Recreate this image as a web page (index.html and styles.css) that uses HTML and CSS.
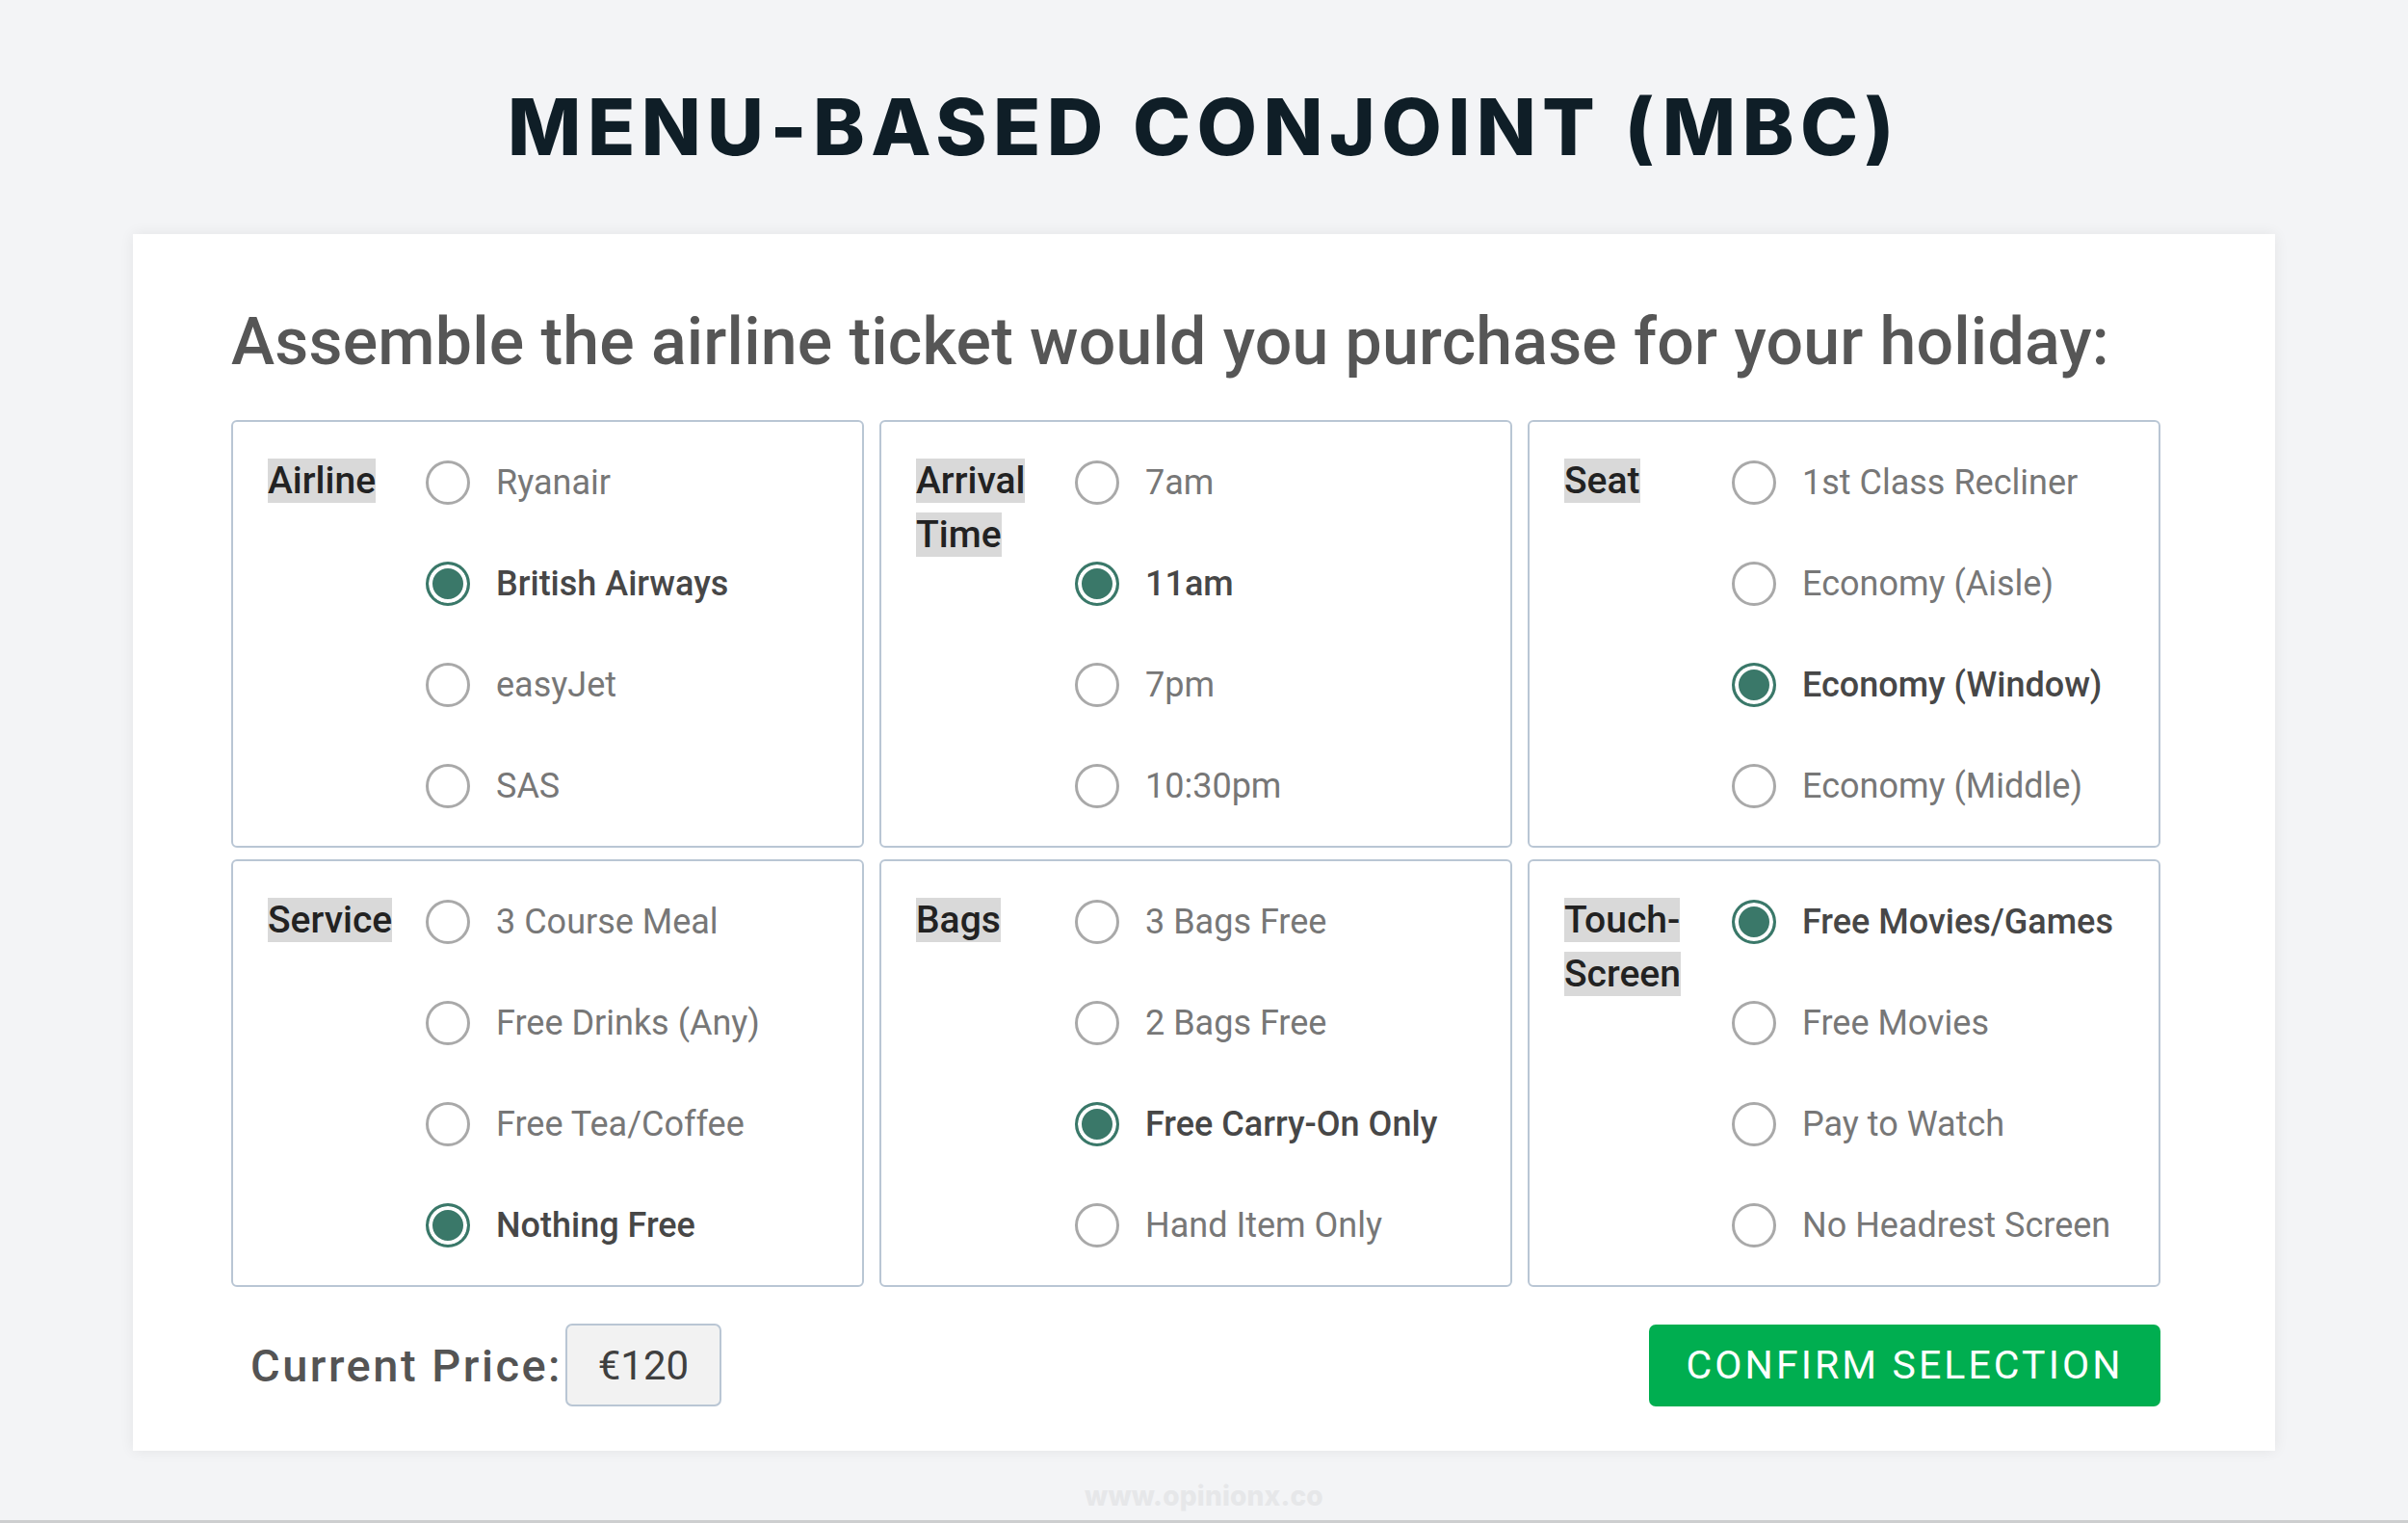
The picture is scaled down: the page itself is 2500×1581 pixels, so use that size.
FILE: index.html
```html
<!DOCTYPE html>
<html lang="en">
<head>
<meta charset="utf-8">
<title>Menu-Based Conjoint (MBC)</title>
<link rel="stylesheet" href="styles.css">
</head>
<body>
<div class="page">
  <h1 class="title">MENU-BASED CONJOINT (MBC)</h1>
  <main class="card">
    <h2 class="question">Assemble the airline ticket would you purchase for your holiday:</h2>
    <div class="grid">
      <section class="box c1">
        <div class="lbl"><span>Airline</span></div>
        <ul class="opts">
          <li class="opt"><span class="radio"></span>Ryanair</li>
          <li class="opt on"><span class="radio"></span>British Airways</li>
          <li class="opt"><span class="radio"></span>easyJet</li>
          <li class="opt"><span class="radio"></span>SAS</li>
        </ul>
      </section>
      <section class="box c2">
        <div class="lbl"><span>Arrival Time</span></div>
        <ul class="opts">
          <li class="opt"><span class="radio"></span>7am</li>
          <li class="opt on"><span class="radio"></span>11am</li>
          <li class="opt"><span class="radio"></span>7pm</li>
          <li class="opt"><span class="radio"></span>10:30pm</li>
        </ul>
      </section>
      <section class="box c3">
        <div class="lbl"><span>Seat</span></div>
        <ul class="opts">
          <li class="opt"><span class="radio"></span>1st Class Recliner</li>
          <li class="opt"><span class="radio"></span>Economy (Aisle)</li>
          <li class="opt on"><span class="radio"></span>Economy (Window)</li>
          <li class="opt"><span class="radio"></span>Economy (Middle)</li>
        </ul>
      </section>
      <section class="box c1">
        <div class="lbl"><span>Service</span></div>
        <ul class="opts">
          <li class="opt"><span class="radio"></span>3 Course Meal</li>
          <li class="opt"><span class="radio"></span>Free Drinks (Any)</li>
          <li class="opt"><span class="radio"></span>Free Tea/Coffee</li>
          <li class="opt on"><span class="radio"></span>Nothing Free</li>
        </ul>
      </section>
      <section class="box c2">
        <div class="lbl"><span>Bags</span></div>
        <ul class="opts">
          <li class="opt"><span class="radio"></span>3 Bags Free</li>
          <li class="opt"><span class="radio"></span>2 Bags Free</li>
          <li class="opt on"><span class="radio"></span>Free Carry-On Only</li>
          <li class="opt"><span class="radio"></span>Hand Item Only</li>
        </ul>
      </section>
      <section class="box c3">
        <div class="lbl"><span>Touch-<br>Screen</span></div>
        <ul class="opts">
          <li class="opt on"><span class="radio"></span>Free Movies/Games</li>
          <li class="opt"><span class="radio"></span>Free Movies</li>
          <li class="opt"><span class="radio"></span>Pay to Watch</li>
          <li class="opt"><span class="radio"></span>No Headrest Screen</li>
        </ul>
      </section>
    </div>
    <div class="footer">
      <div class="price">
        <span class="price-label">Current Price:</span>
        <span class="price-value">€120</span>
      </div>
      <button class="confirm" type="button">CONFIRM SELECTION</button>
    </div>
  </main>
  <div class="watermark">www.opinionx.co</div>
</div>
</body>
</html>
```
FILE: styles.css
```css
* { box-sizing: border-box; }

html, body {
  margin: 0;
  padding: 0;
}

body {
  background: #f3f4f6;
  font-family: Roboto, "Noto Sans", sans-serif;
}

.page {
  height: 1581px;
  overflow: hidden;
  padding-top: 92px;
  border-bottom: 3px solid #cdcecf;
  display: flex;
  flex-direction: column;
  align-items: center;
}

.title {
  margin: 0;
  font-family: Inter, "Open Sans", sans-serif;
  font-weight: 800;
  font-size: 81px;
  line-height: 81px;
  letter-spacing: 6.4px;
  color: #0f1e27;
  text-align: center;
}

.card {
  margin-top: 70px;
  width: 2224px;
  height: 1263px;
  background: #ffffff;
  padding: 72px 119px 46px 102px;
  box-shadow: 0 0 14px rgba(0, 0, 0, 0.07);
}

.question {
  margin: 0 0 41px 0;
  font-size: 68px;
  line-height: 80px;
  font-weight: 500;
  color: #565656;
  letter-spacing: 0.2px;
  white-space: nowrap;
}

.grid {
  display: grid;
  grid-template-columns: 1fr 1fr 1fr;
  grid-template-rows: 444px 444px;
  column-gap: 16px;
  row-gap: 12px;
}

.box {
  border: 2px solid #b9c6d4;
  border-radius: 6px;
  padding: 10px 0 10px 36px;
  display: flex;
  align-items: flex-start;
}

.lbl {
  flex: none;
  width: 164px;
  padding-top: 23px;
  font-size: 39px;
  line-height: 56px;
  font-weight: 500;
  color: #222222;
}

.c2 .lbl { width: 165px; }
.c3 .lbl { width: 174px; }

.lbl span {
  background: #d9d9d9;
}

.opts {
  list-style: none;
  margin: 0;
  padding: 0;
}

.opt {
  height: 105px;
  display: flex;
  align-items: center;
  font-size: 36px;
  color: #777777;
  white-space: nowrap;
}

.radio {
  flex: none;
  width: 46px;
  height: 46px;
  border: 3px solid #a9a9a9;
  border-radius: 50%;
  margin-right: 27px;
  background: #ffffff;
}

.opt.on {
  color: #474747;
  font-weight: 500;
}

.opt.on .radio {
  border-color: #3a7869;
  background: #3a7869;
  box-shadow: inset 0 0 0 4px #ffffff;
}

.footer {
  margin-top: 38px;
  height: 86px;
  display: flex;
  align-items: center;
  justify-content: space-between;
}

.price {
  display: flex;
  align-items: center;
  padding-left: 20px;
}

.price-label {
  font-size: 47px;
  font-weight: 500;
  letter-spacing: 2.5px;
  color: #545454;
}

.price-value {
  margin-left: 3px;
  width: 162px;
  height: 86px;
  display: flex;
  align-items: center;
  justify-content: center;
  background: #f2f2f2;
  border: 2px solid #b9c6d4;
  border-radius: 7px;
  font-size: 42px;
  color: #3f3f3f;
}

.confirm {
  width: 531px;
  height: 85px;
  border: none;
  border-radius: 7px;
  background: #00ae50;
  color: #ffffff;
  font-family: Roboto, sans-serif;
  font-size: 41px;
  font-weight: 400;
  letter-spacing: 3.1px;
  padding: 0;
}

.watermark {
  margin-top: 30px;
  font-family: Inter, sans-serif;
  font-weight: 800;
  font-size: 28px;
  line-height: 34px;
  color: #e6e7e9;
  letter-spacing: 0.2px;
}
```
